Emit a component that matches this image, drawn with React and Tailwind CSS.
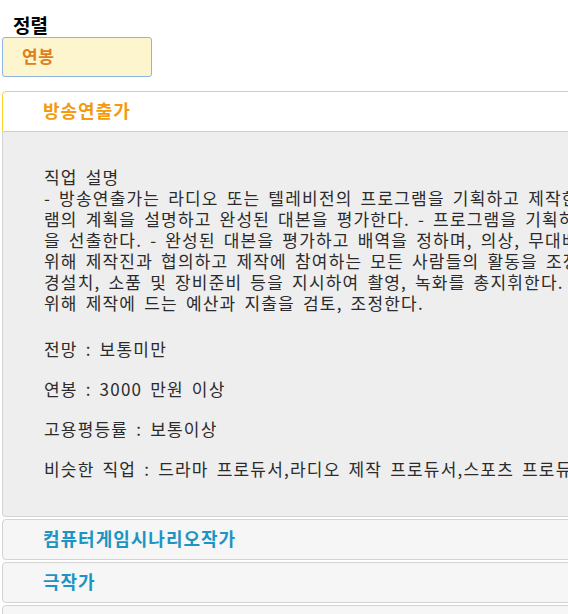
import React from "react";

const font = { fontFamily: '"Noto Sans CJK KR", "Noto Sans", sans-serif' };

export default function App() {
  const lines = [
    "- 방송연출가는 라디오 또는 텔레비전의 프로그램을 기획하고 제작한다. - 프로그",
    "램의 계획을 설명하고 완성된 대본을 평가한다. - 프로그램을 기획하여 출연자(배우, 가수, 사회자 등)",
    "을 선출한다. - 완성된 대본을 평가하고 배역을 정하며, 의상, 무대배경, 조명, 음악 등을",
    "위해 제작진과 협의하고 제작에 참여하는 모든 사람들의 활동을 조정한다. - 카메라 위치, 배",
    "경설치, 소품 및 장비준비 등을 지시하여 촬영, 녹화를 총지휘한다. - 효율적인 제작을",
    "위해 제작에 드는 예산과 지출을 검토, 조정한다.",
  ];
  const head = "flex items-center pl-[40px] pb-[3px] text-[18px] font-bold tracking-[1px]";
  return (
    <div className="w-full overflow-hidden bg-white h-[614px]" style={font}>
      <div className="w-[1000px] pl-[2px]">
        <div className="pl-[11px] pt-[14px] text-[19px] leading-[22px] font-bold text-black">정렬</div>
        <div className="mt-[1px] w-[150px] h-[40px] rounded-[3px] border border-[#8db3e2] bg-[#fdf5cd] flex items-center pl-[19px] pb-[2px] text-[17px] tracking-[0.5px] font-bold text-[#e0801a]">
          연봉
        </div>

        <div className="mt-[14px]">
          <div className={"h-[41px] rounded-t-[4px] border border-[#fad42e] bg-white text-[#f29b12] " + head}>
            방송연출가
          </div>
          <div className="h-[385px] border border-t-0 border-[#d3d3d3] rounded-b-[4px] bg-[#eeeeee] pl-[41px] pt-[34px] text-[17px] leading-[21px] tracking-[1.2px] [word-spacing:3px] text-[#2b2b2b]">
            <div className="whitespace-nowrap">직업 설명</div>
            {lines.map((l, i) => (
              <div key={i} className="whitespace-nowrap">{l}</div>
            ))}
            <div className="mt-[25px] whitespace-nowrap">전망 : 보통미만</div>
            <div className="mt-[19px] whitespace-nowrap">연봉 : 3000 만원 이상</div>
            <div className="mt-[19px] whitespace-nowrap">고용평등률 : 보통이상</div>
            <div className="mt-[19px] whitespace-nowrap">비슷한 직업 : 드라마 프로듀서,라디오 제작 프로듀서,스포츠 프로듀서,TV 제작 프로듀서</div>
          </div>

          <div className={"mt-[2px] h-[41px] rounded-[4px] border border-[#d3d3d3] bg-[#f6f6f6] text-[#1c94c4] " + head}>
            컴퓨터게임시나리오작가
          </div>
          <div className={"mt-[2px] h-[41px] rounded-[4px] border border-[#d3d3d3] bg-[#f6f6f6] text-[#1c94c4] " + head}>
            극작가
          </div>
          <div className={"mt-[2px] h-[41px] rounded-[4px] border border-[#d3d3d3] bg-[#f6f6f6] text-[#1c94c4] " + head}>
            드라마작가
          </div>
        </div>
      </div>
    </div>
  );
}
